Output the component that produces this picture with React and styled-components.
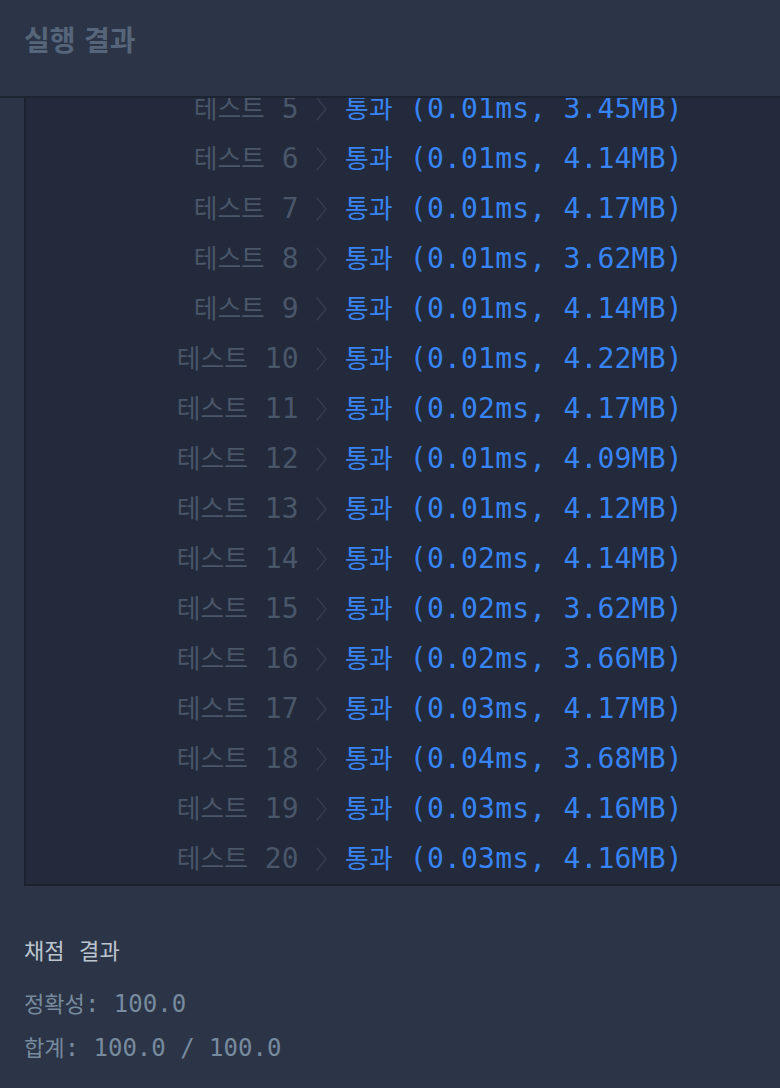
import React from "react";
import styled, { createGlobalStyle } from "styled-components";

const GlobalStyle = createGlobalStyle`
  html, body {
    margin: 0;
    padding: 0;
    background: #2b3547;
  }
  body {
    overflow: hidden;
  }
  #root {
    width: 780px;
    height: 1088px;
  }
`;

const MONO = `"DejaVu Sans Mono", "Noto Sans CJK KR", monospace`;

const Page = styled.div`
  width: 780px;
  height: 1088px;
  display: flex;
  flex-direction: column;
  background: #2b3547;
  overflow: hidden;
`;

const Header = styled.header`
  box-sizing: border-box;
  height: 98px;
  padding: 24px 24px 0;
  border-bottom: 2px solid #1c2331;
  flex: none;
`;

const Title = styled.h2`
  margin: 0;
  font-family: "Noto Sans CJK KR", sans-serif;
  font-weight: 700;
  font-size: 28px;
  line-height: 30px;
  word-spacing: 2px;
  color: #566579;
`;

const Console = styled.section`
  margin-left: 24px;
  height: 786px;
  flex: none;
  background: #222a3b;
  border-left: 2px solid #1b2230;
  border-bottom: 2px solid #1b2230;
  overflow: hidden;
`;

const List = styled.ul`
  list-style: none;
  margin: -14px 0 0;
  padding: 0;
`;

const Row = styled.li`
  display: grid;
  grid-template-columns: 272.5px 46.5px auto;
  align-items: center;
  height: 50px;
  font-family: ${MONO};
  font-size: 28px;
  line-height: 50px;
  white-space: pre;
`;

const Label = styled.span`
  justify-self: end;
  color: #4a5669;
`;

const Hangul = styled.span`
  font-family: "Noto Sans CJK KR", sans-serif;
  font-size: 0.92em;
  line-height: 1;
`;

const Chevron = styled.svg`
  justify-self: center;
  width: 11px;
  height: 24px;
  display: block;
`;

const Result = styled.span`
  color: #3884f5;
  letter-spacing: 0.2px;
`;

const Summary = styled.section`
  padding: 42px 24px 0;
  display: flex;
  flex-direction: column;
  font-family: ${MONO};
`;

const SummaryTitle = styled.div`
  height: 48px;
  font-size: 24px;
  line-height: 46px;
  color: #bcc5cf;
  white-space: pre;
`;

const Lines = styled.div`
  margin-top: 6px;
  display: flex;
  flex-direction: column;
`;

const Line = styled.div`
  height: 44px;
  font-size: 24px;
  line-height: 44px;
  color: #778a9e;
  white-space: pre;
`;

const tests = [
  [5, "0.01ms", "3.45MB"],
  [6, "0.01ms", "4.14MB"],
  [7, "0.01ms", "4.17MB"],
  [8, "0.01ms", "3.62MB"],
  [9, "0.01ms", "4.14MB"],
  [10, "0.01ms", "4.22MB"],
  [11, "0.02ms", "4.17MB"],
  [12, "0.01ms", "4.09MB"],
  [13, "0.01ms", "4.12MB"],
  [14, "0.02ms", "4.14MB"],
  [15, "0.02ms", "3.62MB"],
  [16, "0.02ms", "3.66MB"],
  [17, "0.03ms", "4.17MB"],
  [18, "0.04ms", "3.68MB"],
  [19, "0.03ms", "4.16MB"],
  [20, "0.03ms", "4.16MB"],
];

function ChevronIcon() {
  return (
    <Chevron viewBox="0 0 11 24" fill="none">
      <path d="M1 1 L10 12 L1 23" stroke="#353f50" strokeWidth="1.3" strokeLinecap="round" strokeLinejoin="round" />
    </Chevron>
  );
}

export default function App() {
  return (
    <>
      <GlobalStyle />
      <Page>
        <Header>
          <Title>실행 결과</Title>
        </Header>
        <Console>
          <List>
            {tests.map(([n, time, mem]) => (
              <Row key={n}>
                <Label>
                  <Hangul>테스트</Hangul> {n}
                </Label>
                <ChevronIcon />
                <Result>
                  <Hangul>통과</Hangul> ({time}, {mem})
                </Result>
              </Row>
            ))}
          </List>
        </Console>
        <Summary>
          <SummaryTitle>
            <Hangul>채점</Hangul> <Hangul>결과</Hangul>
          </SummaryTitle>
          <Lines>
            <Line>
              <Hangul>정확성</Hangul>: 100.0
            </Line>
            <Line>
              <Hangul>합계</Hangul>: 100.0 / 100.0
            </Line>
          </Lines>
        </Summary>
      </Page>
    </>
  );
}
